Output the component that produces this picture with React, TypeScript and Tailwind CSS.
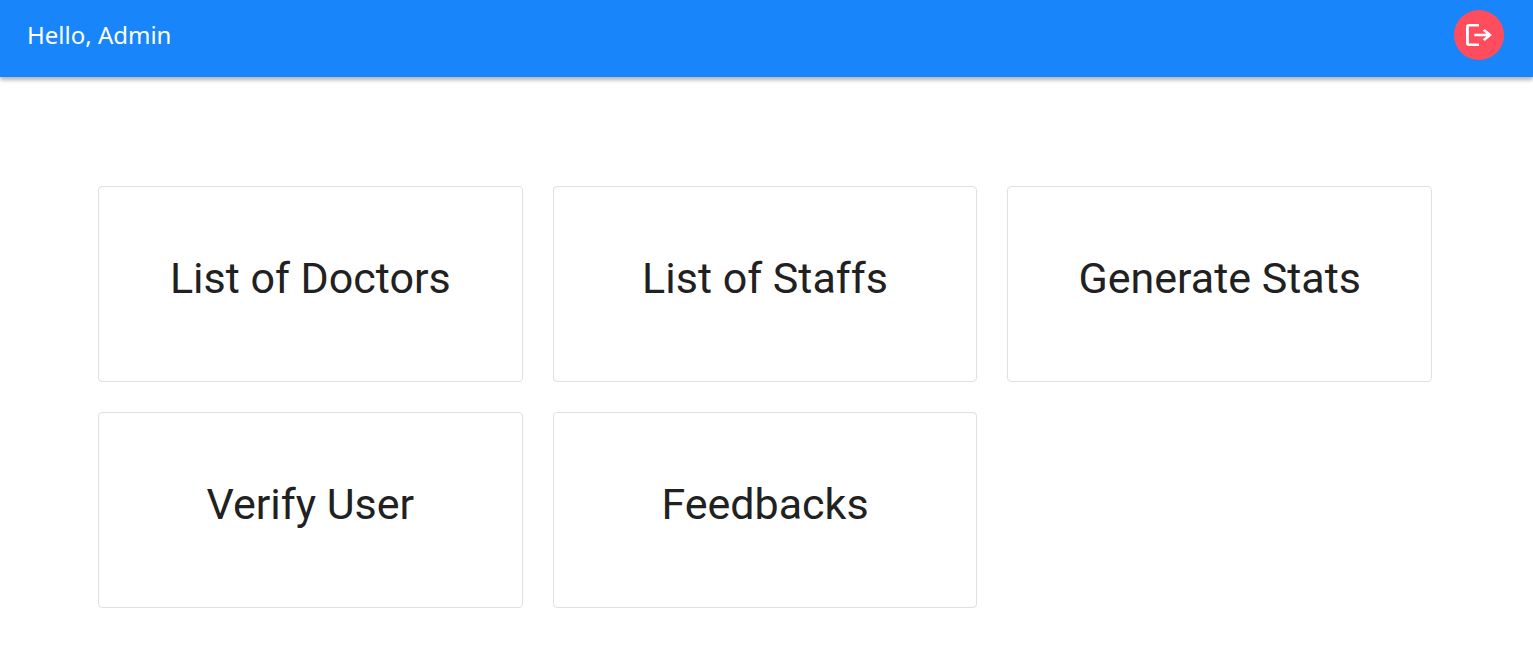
import React from "react";

const cards: string[] = [
  "List of Doctors",
  "List of Staffs",
  "Generate Stats",
  "Verify User",
  "Feedbacks",
];

function LogoutIcon() {
  return (
    <svg
      viewBox="120 -840 720 720"
      preserveAspectRatio="none"
      className="h-[22px] w-[26px]"
      fill="currentColor"
      aria-hidden="true"
    >
      <path d="M200-120q-33 0-56.5-23.5T120-200v-560q0-33 23.5-56.5T200-840h280v80H200v560h280v80H200Zm440-160-55-58 102-102H350v-80h337L585-622l55-58 200 200-200 200Z" />
    </svg>
  );
}

export default function App() {
  return (
    <div className="min-h-screen bg-white">
      <header className="flex h-[77px] items-start justify-between bg-[#1985fb] pt-[10px] pr-[29px] pl-[27px] shadow-[0_3px_4px_rgba(0,0,0,0.3)]">
        <p className="font-['Noto_Sans',sans-serif] text-2xl leading-[50px] text-white">Hello, Admin</p>
        <button
          type="button"
          aria-label="Log out"
          className="flex size-[50px] items-center justify-center rounded-full bg-[#ff4d5e] text-white"
        >
          <LogoutIcon />
        </button>
      </header>
      <main className="grid grid-cols-3 gap-[30px] pt-[109px] pr-[101px] pb-14 pl-[98px]">
        {cards.map((title) => (
          <button
            key={title}
            type="button"
            className="flex h-[196px] items-start justify-center rounded border border-[#e0e0e0] bg-white pt-[66px] font-[Roboto,sans-serif] text-[43px] leading-[50px] text-[#212121]"
          >
            {title}
          </button>
        ))}
      </main>
    </div>
  );
}
